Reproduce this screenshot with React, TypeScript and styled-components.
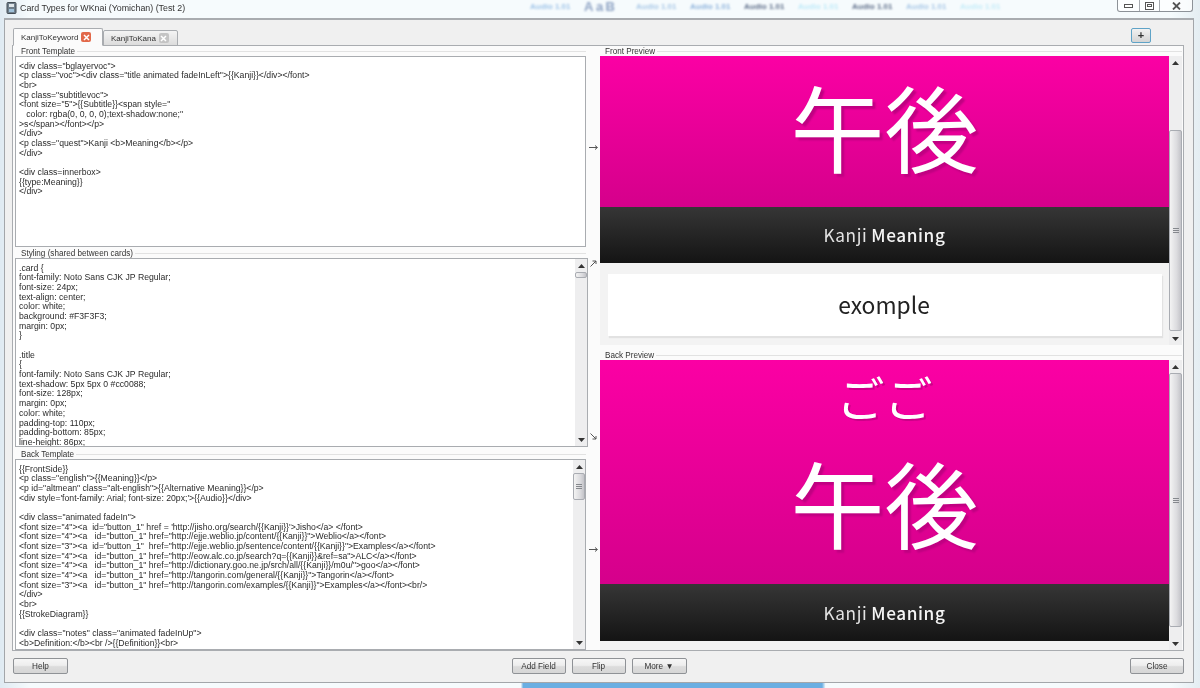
import styled, { createGlobalStyle } from 'styled-components';

const GlobalStyle = createGlobalStyle`
  html, body {
    margin: 0;
    padding: 0;
    background: #eef6fa;
  }
  * {
    box-sizing: border-box;
  }
`;

const UI_FONT = `'Liberation Sans', Arial, sans-serif`;
const CARD_FONT = `'Noto Sans CJK JP', 'Noto Sans', sans-serif`;

const frontLines = [
  `<div class="bglayervoc">`,
  `<p class="voc"><div class="title animated fadeInLeft">{{Kanji}}</div></font>`,
  `<br>`,
  `<p class="subtitlevoc">`,
  `<font size="5">{{Subtitle}}<span style="`,
  `   color: rgba(0, 0, 0, 0);text-shadow:none;"`,
  `>s</span></font></p>`,
  `</div>`,
  `<p class="quest">Kanji <b>Meaning</b></p>`,
  `</div>`,
  ``,
  `<div class=innerbox>`,
  `{{type:Meaning}}`,
  `</div>`,
];

const stylingLines = [
  `.card {`,
  `font-family: Noto Sans CJK JP Regular;`,
  `font-size: 24px;`,
  `text-align: center;`,
  `color: white;`,
  `background: #F3F3F3;`,
  `margin: 0px;`,
  `}`,
  ``,
  `.title`,
  `{`,
  `font-family: Noto Sans CJK JP Regular;`,
  `text-shadow: 5px 5px 0 #cc0088;`,
  `font-size: 128px;`,
  `margin: 0px;`,
  `color: white;`,
  `padding-top: 110px;`,
  `padding-bottom: 85px;`,
  `line-height: 86px;`,
];

const backLines = [
  `{{FrontSide}}`,
  `<p class="english">{{Meaning}}</p>`,
  `<p id="altmean" class="alt-english">{{Alternative Meaning}}</p>`,
  `<div style='font-family: Arial; font-size: 20px;'>{{Audio}}</div>`,
  ``,
  `<div class="animated fadeIn">`,
  `<font size="4"><a  id="button_1" href = 'http://jisho.org/search/{{Kanji}}'>Jisho</a> </font>`,
  `<font size="4"><a   id="button_1" href="http://ejje.weblio.jp/content/{{Kanji}}">Weblio</a></font>`,
  `<font size="3"><a  id="button_1"  href="http://ejje.weblio.jp/sentence/content/{{Kanji}}">Examples</a></font>`,
  `<font size="4"><a   id="button_1" href="http://eow.alc.co.jp/search?q={{Kanji}}&ref=sa">ALC</a></font>`,
  `<font size="4"><a   id="button_1" href="http://dictionary.goo.ne.jp/srch/all/{{Kanji}}/m0u/">goo</a></font>`,
  `<font size="4"><a   id="button_1" href="http://tangorin.com/general/{{Kanji}}">Tangorin</a></font>`,
  `<font size="3"><a   id="button_1" href="http://tangorin.com/examples/{{Kanji}}">Examples</a></font><br/>`,
  `</div>`,
  `<br>`,
  `{{StrokeDiagram}}`,
  ``,
  `<div class="notes" class="animated fadeInUp">`,
  `<b>Definition:</b><br />{{Definition}}<br>`,
];

const blurredLabels = [
  { text: 'Audio 1.01', color: '#9fc4e8' },
  { text: 'AaB', color: '#8ea3c4', big: true },
  { text: 'Audio 1.01', color: '#a9c8e6' },
  { text: 'Audio 1.01', color: '#8fb4dc' },
  { text: 'Audio 1.01', color: '#5f6f8a' },
  { text: 'Audio 1.01', color: '#bfeaf8' },
  { text: 'Audio 1.01', color: '#5f6f8a' },
  { text: 'Audio 1.01', color: '#a9c8e6' },
  { text: 'Audio 1.01', color: '#c5ecf8' },
];

const Page = styled.div`
  position: relative;
  width: 1200px;
  height: 688px;
  overflow: hidden;
  display: flex;
  flex-direction: column;
  padding-left: 4px;
  font-family: ${UI_FONT};
  filter: blur(0.3px);
  background: linear-gradient(90deg, #dfeaf2 0, #f6fbfd 30px, #f6fbfd 1170px, #e4edf2 100%);
`;

const TitleBar = styled.div`
  position: relative;
  height: 18px;
  flex: none;
  width: 1190px;
  display: flex;
  align-items: flex-start;
  padding: 2px 0 0 2px;
  gap: 3px;
`;

const TitleIcon = styled.svg`
  width: 11px;
  height: 12px;
  flex: none;
`;

const TitleText = styled.span`
  font-size: 8.85px;
  line-height: 12px;
  color: #333;
`;

const BlurredRow = styled.div`
  position: absolute;
  left: 526px;
  top: 0;
  display: flex;
  align-items: center;
  height: 14px;
  filter: blur(1.2px);
`;

const BlurredLabel = styled.span<{ $color: string; $big?: boolean }>`
  width: ${({ $big }) => ($big ? '52px' : '54px')};
  font-size: ${({ $big }) => ($big ? '13px' : '8px')};
  line-height: 14px;
  letter-spacing: ${({ $big }) => ($big ? '2.5px' : '0')};
  font-weight: bold;
  color: ${({ $color }) => $color};
  white-space: nowrap;
`;

const CaptionButtons = styled.div`
  position: absolute;
  right: 1px;
  top: 0;
  width: 76px;
  height: 12px;
  display: flex;
  background: rgba(255, 255, 255, 0.7);
  border: 1px solid #8d9298;
  border-top: none;
  border-radius: 0 0 3px 3px;
`;

const CaptionButton = styled.div<{ $width: number; $last?: boolean }>`
  width: ${({ $width }) => $width}px;
  display: flex;
  align-items: center;
  justify-content: center;
  border-right: ${({ $last }) => ($last ? 'none' : '1px solid #a8adb2')};

  svg {
    display: block;
  }
`;

const Frame = styled.div`
  width: 1190px;
  height: 665px;
  flex: none;
  display: flex;
  flex-direction: column;
  background: #f0f0f0;
  border: 1px solid #a3a6aa;
  border-top: 2px solid #a9acb0;
`;

const BottomStrip = styled.div`
  flex: 1;
  margin-left: -4px;
  background: linear-gradient(
    90deg,
    transparent 43.4%,
    #6aaee2 43.6%,
    #6aaee2 68.5%,
    transparent 68.8%
  );
`;

const TabRow = styled.div`
  height: 25px;
  flex: none;
  display: flex;
  align-items: flex-end;
  padding: 0 42px 0 8px;
`;

const Tab = styled.div<{ $active?: boolean }>`
  height: ${({ $active }) => ($active ? '18px' : '16px')};
  width: ${({ $active }) => ($active ? '90px' : '75px')};
  padding-left: 7px;
  margin-bottom: -1px;
  position: relative;
  z-index: ${({ $active }) => ($active ? 2 : 1)};
  display: flex;
  align-items: center;
  gap: 3px;
  font-size: 8px;
  color: #333;
  background: ${({ $active }) =>
    $active ? '#fbfbfb' : 'linear-gradient(#f4f4f4, #dcdcdc)'};
  border: 1px solid #a9acb0;
  border-bottom: ${({ $active }) =>
    $active ? '1px solid #fbfbfb' : '1px solid #a9acb0'};
  border-radius: 2px 2px 0 0;
`;

const TabClose = styled.span<{ $active?: boolean }>`
  width: 10px;
  height: 10px;
  flex: none;
  display: flex;
  align-items: center;
  justify-content: center;
  border-radius: 2px;
  background: ${({ $active }) => ($active ? '#e2694a' : '#c4c4c4')};

  svg {
    display: block;
  }
`;

const AddTabButton = styled.div`
  margin-left: auto;
  margin-bottom: 2px;
  width: 20px;
  height: 15px;
  display: flex;
  align-items: center;
  justify-content: center;
  font-size: 11px;
  font-weight: bold;
  line-height: 1;
  color: #333;
  background: linear-gradient(#f2f2f2, #d4d4d4);
  border: 1px solid #5fa3c7;
  border-radius: 2px;
`;

const Pane = styled.div`
  width: 1172px;
  height: 606px;
  margin-left: 7px;
  flex: none;
  display: flex;
  padding: 0 1px 0 1px;
  background: #fbfbfb;
  border: 1px solid #a9acb0;
`;

const LeftColumn = styled.div`
  width: 572px;
  flex: none;
  display: grid;
  grid-template-rows: 202px 201px 201px;
`;

const Rail = styled.div`
  width: 14px;
  flex: none;
  display: grid;
  grid-template-rows: 202px 201px 201px;
  color: #333;
`;

const RailCell = styled.div<{ $spread?: boolean }>`
  padding: ${({ $spread }) => ($spread ? '12px 0 9px' : '0')};
  display: flex;
  flex-direction: column;
  align-items: center;
  justify-content: ${({ $spread }) => ($spread ? 'space-between' : 'center')};

  svg {
    display: block;
  }
`;

const RightColumn = styled.div`
  width: 582px;
  flex: none;
  display: grid;
  grid-template-rows: 304px 300px;
`;

const Group = styled.div<{ $gap?: number }>`
  min-height: 0;
  display: flex;
  flex-direction: column;
  padding-bottom: ${({ $gap }) => $gap ?? 0}px;
`;

const GroupHeading = styled.div<{ $inset: number }>`
  height: 10px;
  flex: none;
  display: flex;
  align-items: center;
  gap: 2px;
  padding-left: ${({ $inset }) => $inset}px;
  font-size: 8.15px;
  color: #333;
  white-space: nowrap;

  &::after {
    content: '';
    flex: 1;
    height: 1px;
    background: #e2e2e2;
  }
`;

const EditorBox = styled.div<{ $extend?: number }>`
  flex: 1;
  min-height: 0;
  margin-left: 1px;
  margin-right: ${({ $extend }) => -($extend ?? 0)}px;
  display: flex;
  background: #fff;
  border: 1px solid #a9acb0;
  overflow: hidden;
`;

const Code = styled.pre`
  flex: 1;
  margin: 0;
  padding: 4.5px 3px 0 3px;
  overflow: hidden;
  font-family: ${UI_FONT};
  font-size: 8.68px;
  line-height: 9.68px;
  color: #2b2b2b;
`;

const ScrollTrack = styled.div<{ $wide?: boolean }>`
  width: ${({ $wide }) => ($wide ? '13px' : '12px')};
  flex: none;
  display: flex;
  flex-direction: column;
  align-items: stretch;
  background: #eeeeef;
`;

const ScrollArrow = styled.div`
  height: 13px;
  flex: none;
  display: flex;
  align-items: center;
  justify-content: center;

  svg {
    display: block;
  }
`;

const ScrollSpace = styled.div<{ $size?: number }>`
  flex: ${({ $size }) => ($size === undefined ? 1 : 'none')};
  height: ${({ $size }) => ($size === undefined ? 'auto' : `${$size}px`)};
`;

const ScrollThumb = styled.div<{ $size: number }>`
  height: ${({ $size }) => $size}px;
  flex: none;
  display: flex;
  flex-direction: column;
  align-items: center;
  justify-content: center;
  gap: 1px;
  background: linear-gradient(90deg, #f3f3f3, #dcdcdf 60%, #c4c4c9);
  border: 1px solid #a9acb2;
  border-radius: 2px;

  i {
    display: block;
    width: 6px;
    height: 1px;
    background: #85888d;
  }
`;

const PreviewBox = styled.div`
  flex: 1;
  min-height: 0;
  display: flex;
  background: #f3f3f3;
  overflow: hidden;
`;

const PreviewContent = styled.div`
  width: 569px;
  flex: none;
  display: flex;
  flex-direction: column;
  overflow: hidden;
`;

const HeroPanel = styled.div<{ $height: number }>`
  height: ${({ $height }) => $height}px;
  flex: none;
  display: flex;
  flex-direction: column;
  align-items: center;
  justify-content: flex-end;
  color: #fff;
  font-family: ${CARD_FONT};
  background: linear-gradient(#fb00a4, #d5008b);
`;

const KanaLine = styled.div`
  font-size: 48px;
  line-height: 70px;
  margin-bottom: 20px;
  text-shadow: 2px 2px 0 #cc0088;
`;

const KanjiLine = styled.div<{ $drop: number }>`
  font-size: 94px;
  line-height: 100px;
  margin-bottom: ${({ $drop }) => $drop}px;
  margin-top: 0;
  text-shadow: 3px 3px 2px #c00082;
`;

const QuestBar = styled.div<{ $height: number }>`
  height: ${({ $height }) => $height}px;
  flex: none;
  display: flex;
  align-items: center;
  justify-content: center;
  gap: 4px;
  padding-bottom: 1px;
  color: #e4e4e4;
  font-family: ${CARD_FONT};
  font-size: 17.2px;
  letter-spacing: 0.6px;
  background: linear-gradient(#363636, #141414);

  b {
    font-weight: 500;
    color: #f4f4f4;
  }
`;

const AnswerArea = styled.div`
  flex: 1;
  padding: 11px 7px 9px 8px;
  display: flex;
`;

const AnswerCard = styled.div`
  flex: 1;
  display: flex;
  align-items: center;
  justify-content: center;
  padding: 0 2px 1px 0;
  font-family: ${CARD_FONT};
  font-size: 22.8px;
  color: #222;
  background: #fff;
  box-shadow: 1px 2px 1px #e2e2e2;
`;

const BottomBar = styled.div`
  flex: 1;
  display: flex;
  align-items: flex-start;
  justify-content: space-between;
  padding: 7px 9px 0 8px;
`;

const ButtonGroup = styled.div`
  display: flex;
  gap: 6px;
`;

const Button = styled.div<{ $width?: number }>`
  width: ${({ $width }) => $width ?? 54}px;
  height: 16px;
  display: flex;
  align-items: center;
  justify-content: center;
  gap: 3px;
  font-size: 8.2px;
  color: #333;
  background: linear-gradient(#f6f6f6 0, #eeeeee 45%, #dcdcdc 55%, #d6d6d6 100%);
  border: 1px solid #8f9296;
  border-radius: 2px;
`;

const UpArrow = () => (
  <svg width="7" height="4" viewBox="0 0 7 4">
    <path d="M0 4 L3.5 0 L7 4 Z" fill="#333" />
  </svg>
);

const DownArrow = () => (
  <svg width="7" height="4" viewBox="0 0 7 4">
    <path d="M0 0 L7 0 L3.5 4 Z" fill="#333" />
  </svg>
);

const Grip = () => (
  <>
    <i />
    <i />
    <i />
  </>
);

const CloseMark = () => (
  <svg width="7" height="7" viewBox="0 0 7 7">
    <path d="M1 1 L6 6 M6 1 L1 6" stroke="#fff" strokeWidth="1.5" />
  </svg>
);

const RightArrow = () => (
  <svg width="9" height="5" viewBox="0 0 9 5">
    <path d="M0 2.5 H8 M6 0.5 L8.5 2.5 L6 4.5" fill="none" stroke="#555" />
  </svg>
);

export default function App() {
  return (
    <>
      <GlobalStyle />
      <Page>
        <TitleBar>
          <TitleIcon viewBox="0 0 11 12">
            <rect x="1" y="0.5" width="9" height="11" rx="1" fill="#6f7f8c" stroke="#444d55" />
            <rect x="3" y="2" width="5" height="3" fill="#dfe6ea" />
            <rect x="3" y="7" width="5" height="3" fill="#9fc0d8" />
          </TitleIcon>
          <TitleText>Card Types for WKnai (Yomichan) (Test 2)</TitleText>
          <BlurredRow>
            {blurredLabels.map((label, i) => (
              <BlurredLabel key={i} $color={label.color} $big={label.big}>
                {label.text}
              </BlurredLabel>
            ))}
          </BlurredRow>
          <CaptionButtons>
            <CaptionButton $width={22}>
              <svg width="9" height="4" viewBox="0 0 9 4">
                <rect x="0.5" y="0.5" width="8" height="3" fill="#fff" stroke="#555" />
              </svg>
            </CaptionButton>
            <CaptionButton $width={20}>
              <svg width="9" height="8" viewBox="0 0 9 8">
                <rect x="0.5" y="0.5" width="8" height="7" fill="#fff" stroke="#555" />
                <rect x="2.5" y="2.5" width="4" height="2" fill="none" stroke="#555" />
              </svg>
            </CaptionButton>
            <CaptionButton $width={32} $last>
              <svg width="9" height="8" viewBox="0 0 9 8">
                <path d="M1 0.5 L8 7.5 M8 0.5 L1 7.5" stroke="#555" strokeWidth="1.8" />
              </svg>
            </CaptionButton>
          </CaptionButtons>
        </TitleBar>
        <Frame>
          <TabRow>
            <Tab $active>
              KanjiToKeyword
              <TabClose $active>
                <CloseMark />
              </TabClose>
            </Tab>
            <Tab>
              KanjiToKana
              <TabClose>
                <CloseMark />
              </TabClose>
            </Tab>
            <AddTabButton>+</AddTabButton>
          </TabRow>
          <Pane>
            <LeftColumn>
              <Group $gap={1}>
                <GroupHeading $inset={7}>Front Template</GroupHeading>
                <EditorBox>
                  <Code>{frontLines.join('\n')}</Code>
                </EditorBox>
              </Group>
              <Group $gap={2}>
                <GroupHeading $inset={7}>Styling (shared between cards)</GroupHeading>
                <EditorBox $extend={2}>
                  <Code>{stylingLines.join('\n')}</Code>
                  <ScrollTrack>
                    <ScrollArrow>
                      <UpArrow />
                    </ScrollArrow>
                    <ScrollThumb $size={6} />
                    <ScrollSpace />
                    <ScrollArrow>
                      <DownArrow />
                    </ScrollArrow>
                  </ScrollTrack>
                </EditorBox>
              </Group>
              <Group>
                <GroupHeading $inset={7}>Back Template</GroupHeading>
                <EditorBox>
                  <Code>{backLines.join('\n')}</Code>
                  <ScrollTrack>
                    <ScrollArrow>
                      <UpArrow />
                    </ScrollArrow>
                    <ScrollThumb $size={27}>
                      <Grip />
                    </ScrollThumb>
                    <ScrollSpace />
                    <ScrollArrow>
                      <DownArrow />
                    </ScrollArrow>
                  </ScrollTrack>
                </EditorBox>
              </Group>
            </LeftColumn>
            <Rail>
              <RailCell>
                <RightArrow />
              </RailCell>
              <RailCell $spread>
                <svg width="7" height="7" viewBox="0 0 7 7">
                  <path d="M0.5 6.5 L6 1 M2.5 1 H6 V4" fill="none" stroke="#555" />
                </svg>
                <svg width="7" height="7" viewBox="0 0 7 7">
                  <path d="M0.5 0.5 L6 6 M2.5 6 H6 V3" fill="none" stroke="#555" />
                </svg>
              </RailCell>
              <RailCell>
                <RightArrow />
              </RailCell>
            </Rail>
            <RightColumn>
              <Group $gap={5}>
                <GroupHeading $inset={5}>Front Preview</GroupHeading>
                <PreviewBox>
                  <PreviewContent>
                    <HeroPanel $height={151}>
                      <KanjiLine $drop={32}>午後</KanjiLine>
                    </HeroPanel>
                    <QuestBar $height={56}>
                      <span>Kanji</span>
                      <b>Meaning</b>
                    </QuestBar>
                    <AnswerArea>
                      <AnswerCard>exomple</AnswerCard>
                    </AnswerArea>
                  </PreviewContent>
                  <ScrollTrack $wide>
                    <ScrollArrow>
                      <UpArrow />
                    </ScrollArrow>
                    <ScrollSpace $size={61} />
                    <ScrollThumb $size={201}>
                      <Grip />
                    </ScrollThumb>
                    <ScrollSpace />
                    <ScrollArrow>
                      <DownArrow />
                    </ScrollArrow>
                  </ScrollTrack>
                </PreviewBox>
              </Group>
              <Group>
                <GroupHeading $inset={5}>Back Preview</GroupHeading>
                <PreviewBox>
                  <PreviewContent>
                    <HeroPanel $height={224}>
                      <KanaLine>ごご</KanaLine>
                      <KanjiLine $drop={33}>午後</KanjiLine>
                    </HeroPanel>
                    <QuestBar $height={57}>
                      <span>Kanji</span>
                      <b>Meaning</b>
                    </QuestBar>
                  </PreviewContent>
                  <ScrollTrack $wide>
                    <ScrollArrow>
                      <UpArrow />
                    </ScrollArrow>
                    <ScrollThumb $size={254}>
                      <Grip />
                    </ScrollThumb>
                    <ScrollSpace />
                    <ScrollArrow>
                      <DownArrow />
                    </ScrollArrow>
                  </ScrollTrack>
                </PreviewBox>
              </Group>
            </RightColumn>
          </Pane>
          <BottomBar>
            <Button $width={55}>Help</Button>
            <ButtonGroup>
              <Button>Add Field</Button>
              <Button>Flip</Button>
              <Button $width={55}>More ▼</Button>
            </ButtonGroup>
            <Button $width={54}>Close</Button>
          </BottomBar>
        </Frame>
        <BottomStrip />
      </Page>
    </>
  );
}
